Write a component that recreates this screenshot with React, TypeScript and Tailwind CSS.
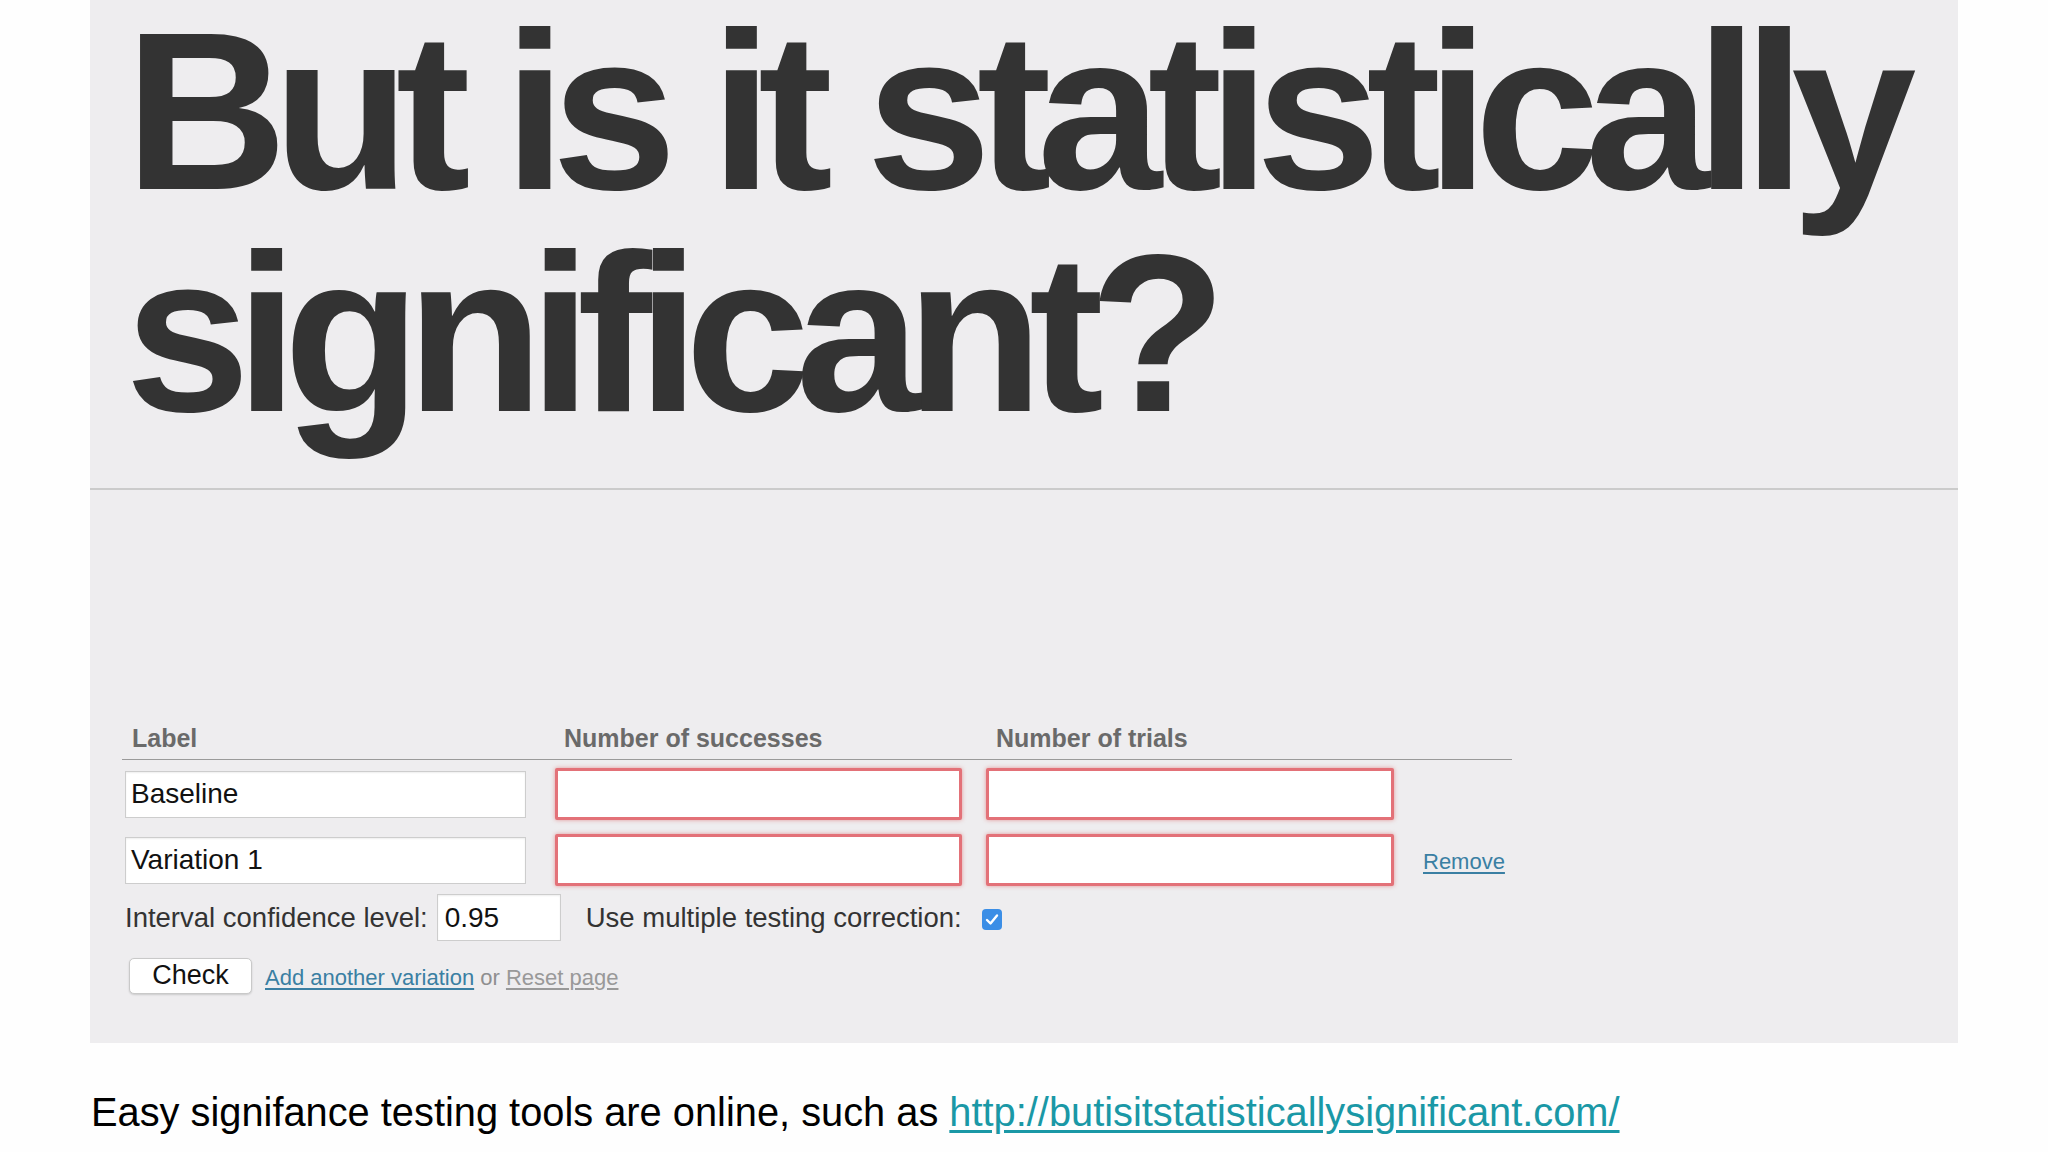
import React from "react"

const font = "font-['Liberation_Sans',Arial,sans-serif]"

function PlainInput({ value, className = "" }: { value?: string; className?: string }) {
  return (
    <div
      className={`h-[47px] flex items-center bg-white border border-[#cdcdcd] shadow-[inset_0_1px_2px_rgba(0,0,0,0.07)] text-[28px] text-[#111] ${className}`}
    >
      {value}
    </div>
  )
}

function ErrorInput({ className = "" }: { className?: string }) {
  return (
    <div
      className={`h-[52px] bg-white border-[3px] border-[#e37178] rounded-[2px] shadow-[0_0_4px_rgba(220,70,70,0.5)] ${className}`}
    />
  )
}

function DataRow({ label, removable }: { label: string; removable?: boolean }) {
  return (
    <div className="h-[52px] flex items-center pl-[3px]">
      <PlainInput value={label} className="w-[401px] pl-[5px]" />
      <ErrorInput className="ml-[29px] w-[407px]" />
      <ErrorInput className="ml-[24px] w-[408px]" />
      {removable && (
        <a className="ml-[29px] text-[22px] text-[#3a7fa3] underline underline-offset-[3px] mt-[2px]">Remove</a>
      )}
    </div>
  )
}

function Checkbox() {
  return (
    <svg width="20" height="21" viewBox="0 0 20 21" className="mt-[4px]">
      <rect x="0" y="0" width="20" height="21" rx="4" fill="#3b8ee6" />
      <path d="M5 11 L8.5 14.5 L15 6.5" fill="none" stroke="#fff" strokeWidth="2.4" strokeLinecap="round" strokeLinejoin="round" />
    </svg>
  )
}

export default function App() {
  return (
    <div className={`w-[2048px] h-[1152px] bg-[#fefefe] overflow-hidden ${font}`}>
      <div className="ml-[90px] w-[1868px] h-[1043px] bg-[#eeedef] flex flex-col">
        <h1 className="pl-[35px] text-[225px] leading-[222px] font-bold tracking-[-0.065em] text-[#333] whitespace-nowrap">
          But is it statistically
          <br />
          significant?
        </h1>
        <div className="mt-[44px] h-[2px] bg-[#cbcbcb]" />

        <div className="mt-[233px] ml-[32px] w-[1390px]">
          <div className="flex pb-[6px] border-b border-[#9a9a9a] text-[25px] leading-[30px] font-bold text-[#6a6a6a]">
            <span className="w-[442px] pl-[10px]">Label</span>
            <span className="w-[432px]">Number of successes</span>
            <span>Number of trials</span>
          </div>

          <div className="mt-[8px] flex flex-col gap-[14px]">
            <DataRow label="Baseline" />
            <DataRow label="Variation 1" removable />
          </div>

          <div className="mt-[8px] h-[47px] flex items-center pl-[3px] text-[27.5px] text-[#333]">
            <span>Interval confidence level:</span>
            <PlainInput value="0.95" className="ml-[9px] w-[124px] pl-[7px]" />
            <span className="ml-[25px]">Use multiple testing correction:</span>
            <span className="ml-[20px]">
              <Checkbox />
            </span>
          </div>

          <div className="mt-[16px] flex items-center pl-[7px]">
            <button className="w-[123px] h-[36px] bg-white border border-[#c9c9c9] rounded-[5px] shadow-[0_1px_2px_rgba(0,0,0,0.15)] text-[27px] leading-none text-[#111]">
              Check
            </button>
            <span className="ml-[13px] text-[22px] mt-[4px]">
              <a className="text-[#3a7fa3] underline underline-offset-[3px]">Add another variation</a>
              <span className="text-[#8f8f8f]"> or </span>
              <a className="text-[#999] underline underline-offset-[3px]">Reset page</a>
            </span>
          </div>
        </div>
      </div>

      <p className="mt-[46px] ml-[91px] text-[39.8px] leading-[46px] text-black whitespace-nowrap">
        Easy signifance testing tools are online, such as{" "}
        <a className="text-[#1a98a6] underline underline-offset-[4px]">http://butisitstatisticallysignificant.com/</a>
      </p>
    </div>
  )
}
